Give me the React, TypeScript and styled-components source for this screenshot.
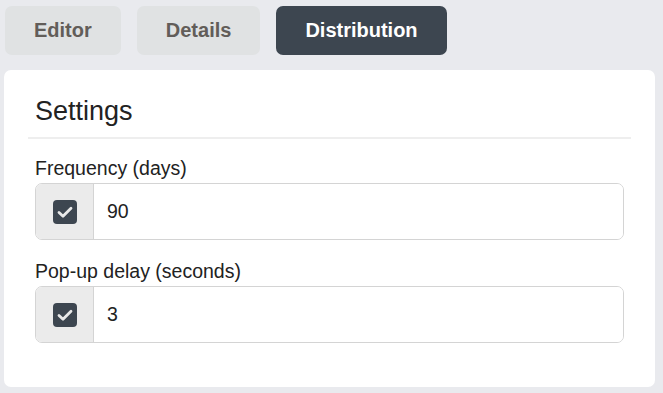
import styled, { createGlobalStyle } from "styled-components";

const GlobalStyle = createGlobalStyle`
  html, body {
    margin: 0;
    background: #e9eaee;
    font-family: "Liberation Sans", Arial, sans-serif;
  }
`;

const Page = styled.div`
  padding: 6px 8px 7px 4px;
`;

const Tabs = styled.nav`
  display: flex;
  gap: 16px;
  margin-left: 1px;
  margin-bottom: 15px;
`;

const Tab = styled.button<{ $active?: boolean }>`
  align-items: center;
  background: ${({ $active }) => ($active ? "#3d4650" : "#e0e2e3")};
  border: none;
  border-radius: 7px;
  color: ${({ $active }) => ($active ? "#ffffff" : "#625d59")};
  display: flex;
  font-family: inherit;
  font-size: 20px;
  font-weight: 700;
  height: 49px;
  padding: 0 29px;
`;

const Card = styled.section`
  background: #ffffff;
  border-radius: 7px;
  padding: 24px;
`;

const CardHeader = styled.h2`
  border-bottom: 2px solid #eeeeee;
  color: #222222;
  font-size: 27px;
  font-weight: 400;
  line-height: 31px;
  margin: 0;
  padding: 2px 7px 10px;
`;

const Fields = styled.div`
  display: flex;
  flex-direction: column;
  gap: 20px;
  padding: 18px 7px 20px;
`;

const Field = styled.label`
  display: flex;
  flex-direction: column;
  gap: 4px;
`;

const LabelText = styled.span`
  color: #222222;
  font-size: 19.5px;
  line-height: 22px;
`;

const InputGroup = styled.div`
  border: 1px solid #d4d4d4;
  border-radius: 7px;
  display: flex;
  height: 55px;
  overflow: hidden;
`;

const Addon = styled.span`
  align-items: center;
  background: #ebebeb;
  border-right: 1px solid #d4d4d4;
  display: flex;
  justify-content: center;
  width: 57px;
`;

const Check = styled.span`
  align-items: center;
  background: #3d4650;
  border-radius: 4px;
  display: flex;
  height: 24px;
  justify-content: center;
  width: 24px;
`;

const Value = styled.input`
  border: none;
  color: #222222;
  flex: 1;
  font-family: inherit;
  font-size: 19.5px;
  outline: none;
  padding: 0 13px;
`;

function CheckBox() {
  return (
    <Check>
      <svg width="24" height="24" viewBox="0 0 24 24" fill="none">
        <path
          d="M6 12.5 L10 16.2 L18 8.2"
          stroke="#e8e8e8"
          strokeWidth="2.8"
          strokeLinecap="round"
          strokeLinejoin="round"
        />
      </svg>
    </Check>
  );
}

const settings = [
  { label: "Frequency (days)", value: "90" },
  { label: "Pop-up delay (seconds)", value: "3" },
];

export default function App(): JSX.Element {
  return (
    <Page>
      <GlobalStyle />
      <Tabs>
        <Tab>Editor</Tab>
        <Tab>Details</Tab>
        <Tab $active>Distribution</Tab>
      </Tabs>
      <Card>
        <CardHeader>Settings</CardHeader>
        <Fields>
          {settings.map((s) => (
            <Field key={s.label}>
              <LabelText>{s.label}</LabelText>
              <InputGroup>
                <Addon>
                  <CheckBox />
                </Addon>
                <Value defaultValue={s.value} />
              </InputGroup>
            </Field>
          ))}
        </Fields>
      </Card>
    </Page>
  );
}
